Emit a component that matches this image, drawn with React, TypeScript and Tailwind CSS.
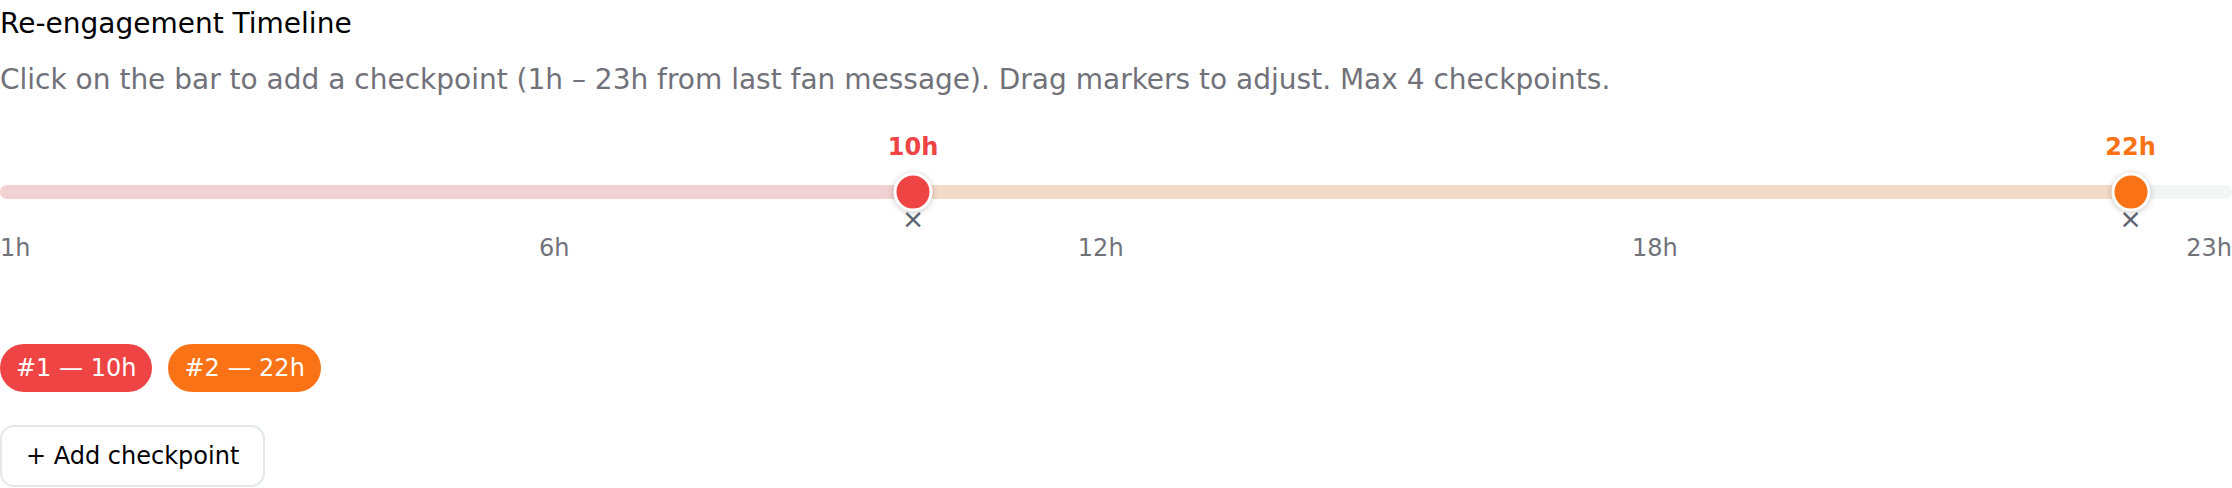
import React from 'react';

type Checkpoint = {
  id: number;
  hour: number;
  dot: string;
  text: string;
  fill: string;
};

const MIN_HOUR = 1;
const MAX_HOUR = 23;

const checkpoints: Checkpoint[] = [
  { id: 1, hour: 10, dot: 'bg-[#ef4444]', text: 'text-[#ef4444]', fill: 'bg-[#ef4444]/20' },
  { id: 2, hour: 22, dot: 'bg-[#f97316]', text: 'text-[#f97316]', fill: 'bg-[#f97316]/20' },
];

const ticks = ['1h', '6h', '12h', '18h', '23h'];

const pct = (hour: number) => ((hour - MIN_HOUR) / (MAX_HOUR - MIN_HOUR)) * 100;

export default function App() {
  return (
    <div className="w-[2232px] bg-white font-['DejaVu_Sans',sans-serif]">
      <h3 className="mt-1 text-[28px] leading-[40px] text-black">Re-engagement Timeline</h3>
      <p className="mt-4 text-[28px] leading-[40px] text-[#71717a]">
        Click on the bar to add a checkpoint (1h – 23h from last fan message). Drag markers to adjust. Max 4
        checkpoints.
      </p>

      {/* track */}
      <div className="relative mt-[85px] h-[14px]">
        <div className="flex h-full w-full overflow-hidden rounded-full bg-[#f3f4f6]">
          {checkpoints.map((cp, i) => {
            const start = i === 0 ? 0 : pct(checkpoints[i - 1].hour);
            return (
              <div key={cp.id} className={`h-full ${cp.fill}`} style={{ width: `${pct(cp.hour) - start}%` }} />
            );
          })}
        </div>

        {checkpoints.map((cp) => (
          <div key={cp.id} className="absolute top-0 h-full" style={{ left: `${pct(cp.hour)}%` }}>
            <span
              className={`absolute top-[-50px] -translate-x-1/2 whitespace-nowrap text-[24px] font-bold leading-[24px] ${cp.text}`}
            >
              {cp.hour}h
            </span>
            <span
              className={`absolute top-1/2 h-[39px] w-[39px] -translate-x-1/2 -translate-y-1/2 rounded-full border-[3px] border-white shadow-[0_1px_6px_rgba(0,0,0,0.22)] ${cp.dot}`}
            />
            <button
              type="button"
              className="absolute top-[20px] -translate-x-1/2 text-[27px] leading-[27px] text-[#5b6270]"
            >
              ×
            </button>
          </div>
        ))}
      </div>

      <div className="mt-[37px] flex justify-between text-[24px] leading-[24px] text-[#71717a]">
        {ticks.map((t) => (
          <span key={t}>{t}</span>
        ))}
      </div>

      <div className="mt-[84px] flex gap-4">
        {checkpoints.map((cp) => (
          <span
            key={cp.id}
            className={`flex h-[48px] items-center rounded-full px-4 text-[24px] text-white ${cp.dot}`}
          >
            #{cp.id} — {cp.hour}h
          </span>
        ))}
      </div>

      <button
        type="button"
        className="mt-[33px] h-[62px] rounded-[14px] border-2 border-[#e5e7eb] bg-white px-6 text-[24px] text-black"
      >
        + Add checkpoint
      </button>
    </div>
  );
}
